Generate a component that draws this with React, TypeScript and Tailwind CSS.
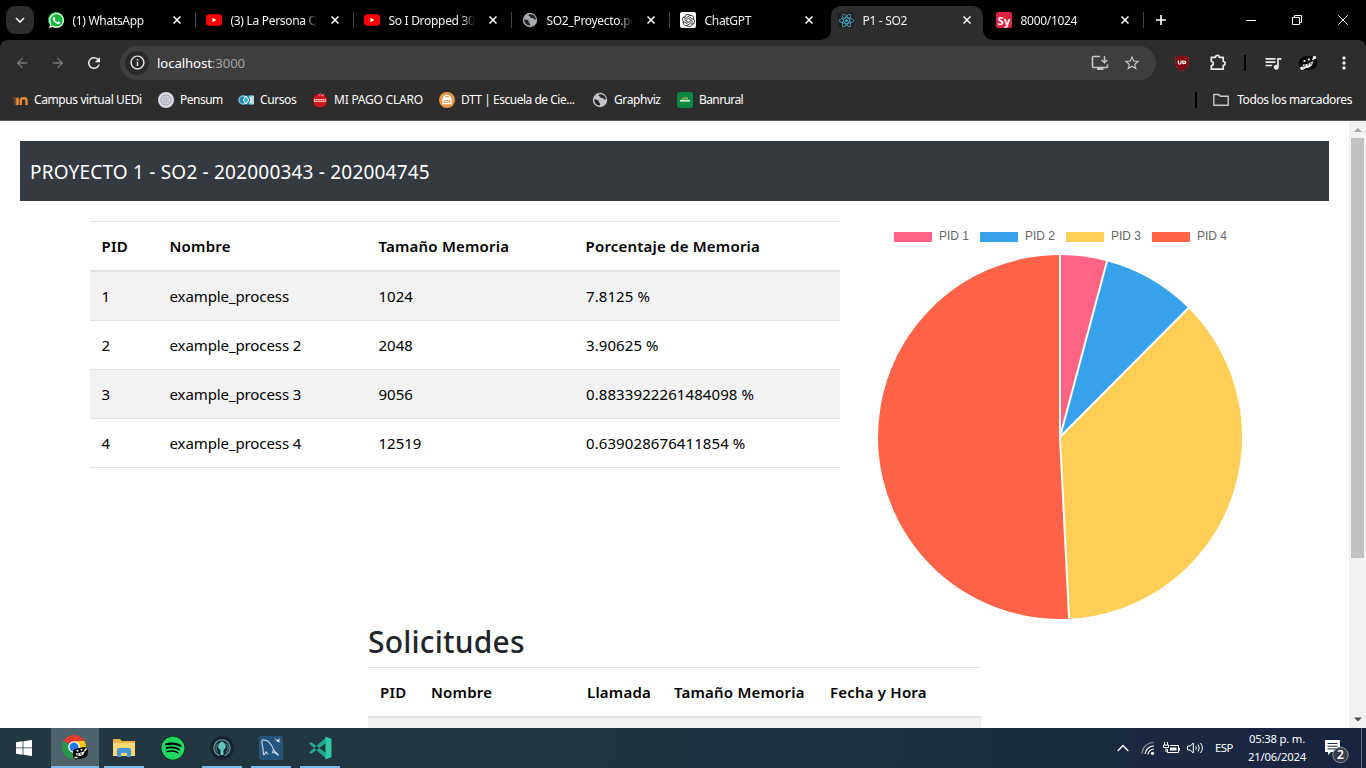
import type { ReactNode } from "react";
import { FaWhatsapp, FaReact, FaSpotify } from "react-icons/fa";
import { SiOpenai } from "react-icons/si";
import {
  MdArrowBack, MdArrowForward, MdRefresh, MdInfoOutline, MdStarBorder,
  MdQueueMusic, MdMoreVert,
} from "react-icons/md";

function GlobeIcon({ color }: { color: string }) {
  return (
    <svg viewBox="0 0 16 16" className="size-4">
      <circle cx="8" cy="8" r="7.2" fill={color} />
      <path d="M2.2 7.2c1.6.3 3 .6 4 1.3.9.7.2 1.600 1 2.300.7.6 1.200 1 .8 2.600-3 .2-5.600-2-5.800-6.200Z" fill="#222" />
      <path d="M7.200 2.200c-.8 1-1 1.800.3 2 1.300.2.4 1.500 1.700 1.900 1.500.4 1.800-.2 2.700.8.700.8 1.400.9 2 .3C13.600 4.200 11.200 1.800 7.200 2.200Z" fill="#222" />
    </svg>
  );
}

function YoutubeIcon() {
  return (
    <svg viewBox="0 0 16 16" className="size-4">
      <rect x="0" y="2.200" width="16" height="11.600" rx="3" fill="#f00" />
      <path d="M6.400 5.700v4.600L10.300 8Z" fill="#fff" />
    </svg>
  );
}

function WhatsappIcon() {
  return (
    <span className="grid size-4 place-items-center rounded-full bg-[#17b83f] text-white">
      <FaWhatsapp className="size-[17px] shrink-0" />
    </span>
  );
}

type TabInfo = { title: string; icon: ReactNode; active?: boolean; sep?: boolean };

const tabs: TabInfo[] = [
  { title: "(1) WhatsApp", icon: <WhatsappIcon />, sep: true },
  { title: "(3) La Persona Q", icon: <YoutubeIcon />, sep: true },
  { title: "So I Dropped 30", icon: <YoutubeIcon />, sep: true },
  { title: "SO2_Proyecto.pd", icon: <GlobeIcon color="#a5a9b0" />, sep: true },
  {
    title: "ChatGPT",
    icon: <span className="grid size-4 place-items-center rounded-[2px] bg-white text-[#333]"><SiOpenai className="size-[13px]" /></span>,
  },
  {
    title: "P1 - SO2",
    active: true,
    icon: <span className="grid size-4 place-items-center rounded-[3px] bg-[#20232a] text-[#53b9d4]"><FaReact className="size-[15px]" /></span>,
  },
  {
    title: "8000/1024",
    sep: true,
    icon: <span className="grid size-4 place-items-center rounded-[2px] bg-[#dc2344] text-[11px] leading-none font-bold text-white">Sy</span>,
  },
];

function CloseX() {
  return (
    <svg viewBox="0 0 8 8" className="size-2">
      <path d="M.5.5l7 7M7.500.5l-7 7" stroke="#fff" strokeWidth="1.500" />
    </svg>
  );
}

function Tab({ title, icon, active, sep }: TabInfo) {
  return (
    <div className={active ? "relative mr-[5px] ml-px flex h-[34px] w-[152px] items-center rounded-t-[10px] bg-[#2d2d2d] pb-[6px] pl-[7px]" : "relative flex h-[34px] w-[158px] items-center pb-[6px] pl-2"}>
      {active && (
        <>
          <svg viewBox="0 0 10 10" className="absolute bottom-0 -left-[10px] size-[10px]"><path d="M10 0v10H0A10 10 0 0 0 10 0Z" fill="#2d2d2d" /></svg>
          <svg viewBox="0 0 10 10" className="absolute -right-[10px] bottom-0 size-[10px]"><path d="M0 0v10h10A10 10 0 0 1 0 0Z" fill="#2d2d2d" /></svg>
        </>
      )}
      {icon}
      <div className="ml-[8.500px] w-[86.500px] overflow-hidden mask-r-from-85% mask-r-to-100% pt-px text-[12px] leading-4 tracking-[-0.3px] whitespace-nowrap text-[#f2f2f2]">{title}</div>
      <span className="ml-[14px]"><CloseX /></span>
      {sep && <i className="ml-[14px] h-4 w-px bg-[#444]" />}
    </div>
  );
}

function TabStrip() {
  return (
    <div className="flex h-10 items-start bg-black pt-[6px] pl-[6px]">
      <div className="mr-[6px] grid size-7 place-items-center rounded-[9px] bg-[#2d2d2d]">
        <svg viewBox="0 0 10 6" className="h-[6px] w-[10px]"><path d="M1 1l4 4 4-4" fill="none" stroke="#fff" strokeWidth="1.700" /></svg>
      </div>
      {tabs.map((t) => <Tab key={t.title} {...t} />)}
      <svg viewBox="0 0 12 12" className="mt-2 ml-[9px] size-3"><path d="M6 1v10M1 6h10" stroke="#fff" strokeWidth="1.600" /></svg>
      <div className="ml-auto flex h-7 items-center pr-[18px]">
        <svg viewBox="0 0 10 10" className="mr-9 size-[10px]"><path d="M0 5.500h10" stroke="#fff" /></svg>
        <svg viewBox="0 0 10 10" className="mr-9 size-[10px]"><path d="M.5 2.500h7v7h-7zM2.500 2.500v-2h7v7h-2" fill="none" stroke="#fff" /></svg>
        <svg viewBox="0 0 10 10" className="size-[10px]"><path d="M.3.3l9.400 9.400M9.700.3L.3 9.700" stroke="#fff" /></svg>
      </div>
    </div>
  );
}

function Toolbar() {
  return (
    <div className="bg-black">
      <div className="flex h-[45px] items-center rounded-t-[8px] bg-[#2d2d2d] pl-[14px]">
        <MdArrowBack className="size-4 text-[#757575]" />
        <MdArrowForward className="ml-5 size-4 text-[#757575]" />
        <MdRefresh className="ml-[19px] size-[18px] text-[#e8e8e8]" />
        <div className="ml-[17px] flex h-[34px] w-[1036px] shrink-0 items-center rounded-full bg-[#3e3e3e] pl-[5px]">
          <span className="grid size-6 place-items-center rounded-full bg-[#2a2a2a]"><MdInfoOutline className="size-[17px] text-[#e8e8e8]" /></span>
          <span className="ml-2 text-[13.200px] leading-5 tracking-[-0.1px] text-white">localhost<span className="text-[#a3a3a3]">:3000</span></span>
          <svg viewBox="0 0 18 16" className="ml-auto h-4 w-[18px]"><path d="M9 1.500H2.500Q1.500 1.500 1.500 2.500v9q0 1 1 1h13q1 0 1-1V9.500" fill="none" stroke="#c3c3c3" strokeWidth="1.700" /><path d="M6 12.500h6.500V15H6z" fill="#c3c3c3" /><path d="M13.500 1v6M10.700 5l2.800 2.800L16.300 5" fill="none" stroke="#c3c3c3" strokeWidth="1.500" /></svg>
          <MdStarBorder className="mr-[15px] ml-[14px] size-[18px] text-[#c3c3c3]" />
        </div>
        <svg viewBox="0 0 16 16" className="ml-[18px] size-4 shrink-0">
          <path d="M8 .5c2 1.300 4.300 1.700 6.500 1.700v5c0 4.300-2.700 7-6.500 8.500-3.800-1.500-6.500-4.200-6.500-8.500v-5C4 2.200 6 1.800 8 .5Z" fill="#800610" stroke="#a2242d" strokeWidth=".7" />
          <path d="M4.300 5.500v2.200c0 1.700 2.800 1.700 2.800 0V5.500M8.900 5.500v3.600M8.900 6h.8c2.700 0 2.700 2.700 0 2.700h-.8" fill="none" stroke="#fff" strokeWidth="1.200" />
        </svg>
        <svg viewBox="0 0 17 17" className="ml-5 size-[17px] shrink-0">
          <path d="M1.300 3.300h4.200a1.900 1.900 0 0 1 3.800 0h3.900v4.200a1.900 1.900 0 0 1 0 3.800v3.900H1.300v-3.700a2 2 0 0 0 0-4z" fill="none" stroke="#e8e8e8" strokeWidth="1.700" strokeLinejoin="round" />
        </svg>
        <i className="ml-[17px] h-4 w-[2px] bg-black" />
        <MdQueueMusic className="ml-[17px] size-[20px] text-[#e8e8e8]" />
        <svg viewBox="0 0 20 16" className="ml-[15px] h-4 w-5">
          <ellipse cx="10" cy="8" rx="9.500" ry="7.300" fill="#090909" />
          <path d="M3.500 13.500Q6 14 8 12M14.500 5 16.500 2.500" fill="none" stroke="#eee" strokeWidth="1.700" />
          <path d="M4.500 9.500c3 .3 7-.8 10.200-3.500 1.200 7-8.500 9.500-10.200 3.500Z" fill="#eee" />
          <path d="M7 9.500v2M10 8.500v2M12.800 7.500v2" stroke="#222" />
          <circle cx="4" cy="13.300" r="1.800" fill="#eee" /><circle cx="16.500" cy="2.500" r="1.700" fill="#eee" />
          <circle cx="6.500" cy="6" r="1.100" fill="#eee" /><circle cx="11" cy="4.500" r="1.100" fill="#eee" />
        </svg>
        <MdMoreVert className="ml-4 size-5 text-[#e8e8e8]" />
      </div>
    </div>
  );
}

function Bookmark({ icon, label, cls }: { icon: ReactNode; label: string; cls: string }) {
  return (
    <div className={cls}>
      {icon}
      <span className="ml-[6px]">{label}</span>
    </div>
  );
}

function Bookmarks() {
  return (
    <div className="flex h-9 items-center border-b border-[#595959] bg-[#2d2d2d] pb-[6px] pl-3 text-[12px] leading-4 tracking-[-0.4px] whitespace-nowrap text-white">
      <Bookmark cls="flex w-[146px] items-center" label="Campus virtual UEDi" icon={
        <svg viewBox="0 0 16 16" className="size-4">
          <path d="M1 6h2v7M4.500 6.500v7" fill="none" stroke="#6b4b35" strokeWidth="1.800" />
          <path d="M5.500 5.500v7.500M8.800 13V8.500c0-3 5.700-3 5.700 0V13" fill="none" stroke="#ee8c35" strokeWidth="2.400" />
        </svg>} />
      <Bookmark cls="flex w-[80px] items-center tracking-[-0.5px]" label="Pensum" icon={
        <svg viewBox="0 0 16 16" className="size-4"><circle cx="8" cy="8" r="8" fill="#d8d9e2" /><circle cx="8" cy="8" r="5" fill="none" stroke="#9c9eae" /><path d="M6 5v6M8 4.500v7M10 5v6" stroke="#a9aaba" /></svg>} />
      <Bookmark cls="flex w-[74px] items-center" label="Cursos" icon={
        <svg viewBox="0 0 16 16" className="size-4"><path d="M11 3.500h5v9h-5z" fill="#b9dbe5" /><path d="M5 3.500h8v9H5z" fill="#238fb2" /><circle cx="5" cy="8" r="4" fill="#1d86ab" stroke="#7dc5da" strokeWidth="1.500" /><path d="M8 4l3 4-3 4-3-4Z" fill="#31b7dc" stroke="#fff" /><path d="M11.500 4.500a5 5 0 0 1 0 7" fill="none" stroke="#fff" strokeWidth="1.300" /></svg>} />
      <Bookmark cls="flex w-[127px] items-center tracking-[-0.230px]" label="MI PAGO CLARO" icon={
        <svg viewBox="0 0 16 16" className="size-4"><circle cx="8" cy="8.500" r="7" fill="#cf1720" /><path d="M2 8.500h12" stroke="#efb0b0" strokeWidth="3" /><path d="M3 8.500h10" stroke="#c33" strokeWidth="1.200" strokeDasharray="1.500 .7" /><path d="M7 3.500l1.500-2M9 4l3-1.500" stroke="#f99" /></svg>} />
      <Bookmark cls="flex w-[153px] items-center tracking-[-0.480px]" label="DTT | Escuela de Cie..." icon={
        <svg viewBox="0 0 16 16" className="size-4"><circle cx="8" cy="8" r="8" fill="#ea9548" /><path d="M4 7.500h8v4H4zM4.500 6C5.500 2.500 10.500 2.500 11.500 6Z" fill="none" stroke="#fff" strokeWidth="1.300" /><path d="M6 9.500h4" stroke="#fff" /></svg>} />
      <Bookmark cls="flex w-[85px] items-center" label="Graphviz" icon={<GlobeIcon color="#c2c4ca" />} />
      <Bookmark cls="flex items-center tracking-[-0.600px]" label="Banrural" icon={
        <svg viewBox="0 0 16 16" className="size-4"><rect width="16" height="16" rx="2.500" fill="#0c8742" /><path d="M3 8.700h10" stroke="#d4ecd9" strokeWidth="1.800" /><path d="M5 7c2-1 4-1.500 6-.5" stroke="#e2c34f" fill="none" /></svg>} />
      <i className="ml-auto h-4 w-[2px] bg-black" />
      <svg viewBox="0 0 16 14" className="mr-2 ml-4 h-[14px] w-4"><path d="M.8 1.500h5l1.500 1.800h7.900v9H.8z" fill="none" stroke="#c7c7c7" strokeWidth="1.400" strokeLinejoin="round" /></svg>
      <span className="mr-[14px]">Todos los marcadores</span>
    </div>
  );
}

const processes = [
  ["1", "example_process", "1024", "7.8125 %"],
  ["2", "example_process 2", "2048", "3.90625 %"],
  ["3", "example_process 3", "9056", "0.8833922261484098 %"],
  ["4", "example_process 4", "12519", "0.639028676411854 %"],
];

function ProcessTable() {
  return (
    <div className="mt-5 ml-[90px] w-[750px] text-[15px] leading-6 text-black">
      <div className="grid h-[51px] grid-cols-[68px_209px_207px_1fr] items-center border-t border-b-2 border-[#dee2e6] font-semibold tracking-[0.2px]">
        {["PID", "Nombre", "Tamaño Memoria", "Porcentaje de Memoria"].map((h) => <span key={h} className="pl-[11.500px]">{h}</span>)}
      </div>
      {processes.map(([pid, name, size, pct]) => (
        <div key={pid} className="grid h-[49px] grid-cols-[68px_209px_207px_1fr] items-center border-b border-[#dee2e6] odd:bg-white even:bg-[#f2f2f2]">
          <span className="pl-[11.500px]">{pid}</span>
          <span className="pl-[11.500px] tracking-[-0.1px]">{name}</span>
          <span className="pl-[11.500px]">{size}</span>
          <span className="pl-3 tracking-[0.090px]">{pct}</span>
        </div>
      ))}
    </div>
  );
}

const slices = [
  { label: "PID 1", value: 1024, color: "#ff6384" },
  { label: "PID 2", value: 2048, color: "#36a2eb" },
  { label: "PID 3", value: 9056, color: "#ffce56" },
  { label: "PID 4", value: 12519, color: "#ff6347" },
];

function Pie() {
  const total = slices.reduce((s, x) => s + x.value, 0);
  const point = (v: number) => {
    const a = (v / total) * Math.PI * 2;
    return `${183 + 182 * Math.sin(a)} ${183 - 182 * Math.cos(a)}`;
  };
  let acc = 0;
  return (
    <svg viewBox="0 0 366 366" className="mt-[12px] size-[366px]">
      {slices.map((s) => {
        const from = acc;
        acc += s.value;
        return <path key={s.label} d={`M183 183L${point(from)}A182 182 0 ${s.value * 2 > total ? 1 : 0} 1 ${point(acc)}Z`} fill={s.color} />;
      })}
      {slices.map((s) => {
        const line = <path key={s.label} d={`M183 183L${point(acc)}`} stroke="#fff" strokeWidth="2" />;
        acc += s.value;
        return line;
      })}
    </svg>
  );
}

function Chart() {
  return (
    <div className="mt-[31px] ml-[37px] flex w-[366px] flex-col items-center font-['Liberation_Sans',sans-serif]">
      <div className="flex h-[10px] items-center gap-[10px] pl-[2px]">
        {slices.map((s) => (
          <div key={s.label} className="flex w-[76px] items-center gap-[7px] text-[12px] leading-3 whitespace-nowrap text-[#666]">
            <i className="h-[10px] w-[38px] shrink-0" style={{ backgroundColor: s.color }} />
            <span className="-mt-[2px]">{s.label}</span>
          </div>
        ))}
      </div>
      <Pie />
    </div>
  );
}

function Page() {
  return (
    <div className="flex h-[607px] bg-white">
      <main className="h-full w-[1349px] overflow-hidden pt-5">
        <header className="mr-5 ml-5 flex h-[60px] items-center bg-[#343a40] pt-[2px] pl-[10px] text-[19px] tracking-[0.200px] text-white">
          PROYECTO 1 - SO2 - 202000343 - 202004745
        </header>
        <div className="flex h-[420px] items-start">
          <ProcessTable />
          <Chart />
        </div>
        <section className="ml-[368px] w-[613px]">
          <h2 className="h-[46px] pt-[2px] text-[30px] leading-[38px] font-medium tracking-[0.200px] text-[#212529]">Solicitudes</h2>
          <div className="grid h-[51px] grid-cols-[51px_156px_87px_156px_1fr] items-center border-t border-b-2 border-[#dee2e6] text-[15px] font-semibold tracking-[0.2px] text-black">
            {["PID", "Nombre", "Llamada", "Tamaño Memoria", "Fecha y Hora"].map((h) => <span key={h} className="pl-3 whitespace-nowrap">{h}</span>)}
          </div>
          <div className="h-12 bg-[#f2f2f2]" />
        </section>
      </main>
      <div className="flex h-full w-[17px] flex-col items-center bg-[#f1f1f1]">
        <svg viewBox="0 0 17 17" className="size-[17px]"><path d="M5 11h8L9 7Z" fill="#a3a3a3" /></svg>
        <div className="h-[420px] w-[13px] bg-[#c1c1c1]" />
        <svg viewBox="0 0 17 17" className="mt-auto size-[17px]"><path d="M5 6.500h8l-4 4Z" fill="#505050" /></svg>
      </div>
    </div>
  );
}

function ChromeIcon() {
  return (
    <svg viewBox="0 0 26 26" className="size-[26px]">
      <path d="M12 12 1.600 6A12 12 0 0 1 22.400 6Z" fill="#e33b2e" />
      <path d="M12 12 1.600 6A12 12 0 0 0 12 24l5-9Z" fill="#249a48" />
      <path d="M12 12 12 6h10.400A12 12 0 0 1 12 24l5-9Z" fill="#fbc816" />
      <circle cx="12" cy="12" r="5.800" fill="#fff" /><circle cx="12" cy="12" r="4.500" fill="#2376e5" />
      <path d="M11 17q0-3 4-3.500l7-1.500q4 0 4 5 0 5-4 6l-7 1.500q-4 0-4-4Z" fill="#080808" />
      <path d="M13.500 18.500q4 0 9-2.500c.5 5-7.500 7-9 2.500Z" fill="#eee" />
      <path d="M16 18.500v2M19 18v2" stroke="#222" />
      <path d="M12.500 22.500h3M22.500 16l2-2.500" stroke="#eee" strokeWidth="1.500" />
      <circle cx="15.500" cy="15.800" r="1" fill="#eee" /><circle cx="19.500" cy="14.700" r="1" fill="#eee" />
    </svg>
  );
}

function TaskItem({ children, kind }: { children: ReactNode; kind: "active" | "open" | "idle" }) {
  return (
    <div className={kind === "active" ? "flex h-10 w-12 flex-col items-center bg-[#4e626c]" : "flex h-10 w-10 flex-col items-center"}>
      <div className="grid h-[38px] place-items-center pt-[2px]">{children}</div>
      {kind !== "idle" && <div className="h-[2px] w-full bg-[#76b9ed]" />}
    </div>
  );
}

function Taskbar() {
  return (
    <div className="flex h-10 items-center bg-linear-to-r from-[#233840] via-[#20343f] via-45% to-[#17243f] text-white">
      <svg viewBox="0 0 16 16" className="ml-4 size-4"><path d="M0 2.200 6.600 1.300v6.200H0zM7.400 1.200 16 0v7.500H7.400zM0 8.300h6.600v6.400L0 13.800zM7.400 8.300H16V16l-8.600-1.200z" fill="#fff" /></svg>
      <div className="ml-[19px] flex gap-[9px]">
        <div className="-mr-1"><TaskItem kind="active"><ChromeIcon /></TaskItem></div>
        <TaskItem kind="open">
          <svg viewBox="0 0 22 20" className="h-5 w-[22px]"><path d="M0 1h7l2 2h13v15H0z" fill="#e9b540" /><path d="M0 5h22v13H0z" fill="#fcd975" /><path d="M4 19v-7q0-2 2-2h10q2 0 2 2v7h-4v-4H8v4z" fill="#4694d1" /></svg>
        </TaskItem>
        <TaskItem kind="idle"><span className="grid size-6 place-items-center rounded-full bg-black"><FaSpotify className="size-6 text-[#1ed760]" /></span></TaskItem>
        <TaskItem kind="open">
          <svg viewBox="0 0 24 24" className="size-6">
            <circle cx="12" cy="12" r="11.800" fill="#17232c" />
            <path d="M9.500 19.500a8 8 0 1 1 5 0" fill="none" stroke="#639b9b" strokeWidth="1.200" />
            <path d="M8 16.500c-3-3-2.500-7 .5-9M16 16.500c3-3 2.500-7-.5-9" fill="none" stroke="#3e7277" strokeWidth="1.500" />
            <path d="M12 5.500c3 1.500 4.500 4 3.500 6.500l-2 2.200V19h-3v-4.800l-2-2.200c-1-2.500.5-5 3.500-6.500Z" fill="#62c8bc" />
          </svg>
        </TaskItem>
        <TaskItem kind="open">
          <svg viewBox="0 0 24 24" className="size-6"><rect width="24" height="24" rx="2" fill="#24537e" /><path d="M5 19c-1.500-2-.5-4-1-7C3 9 2 6 3.500 4c5-.5 9 4 11 9.500.5 2 3 3 5 5.500M5 19l2-3 2 2.500M14.500 13.500l-1 3 3 .5 3 2.500" fill="none" stroke="#d0deeb" strokeWidth="1.100" /><path d="M15.500 1.500 18 4l3-1.500L20 5l2 1.500-4-.8Z" fill="#e0e9f0" /></svg>
        </TaskItem>
        <TaskItem kind="open">
          <svg viewBox="0 0 24 24" className="size-6"><path d="M1 7.500 3 6l15 11v5.500zM1 16.500 3 18 18 7V1.500z" fill="#21a98f" /><path d="M17.500.5 23.500 3v18l-6 2.500z" fill="#2fc7aa" /></svg>
        </TaskItem>
      </div>
      <div className="ml-auto flex items-center">
        <svg viewBox="0 0 12 8" className="h-2 w-3"><path d="M.7 7 6 1.500 11.300 7" fill="none" stroke="#fff" strokeWidth="1.300" /></svg>
        <svg viewBox="0 0 14 14" className="ml-[12px] size-[14px] text-white"><path d="M1 12.500A11.500 11.500 0 0 1 12.500 1.500" fill="none" stroke="#8793a5" strokeWidth="1.200" /><path d="M4 13A9 9 0 0 1 13 5M7 13.500A6 6 0 0 1 13 8" fill="none" stroke="#fff" strokeWidth="1.200" /><circle cx="11.500" cy="12.300" r="1.600" fill="#fff" /></svg>
        <svg viewBox="0 0 17 14" className="ml-2 h-[14px] w-[17px]"><path d="M1.500 1v3M4.500 1v3M.5 4h5v2.500h-5zM3 6.500V11" fill="none" stroke="#fff" /><path d="M7 4.500h8.500v7H4.500V8" fill="none" stroke="#fff" /><path d="M7 6.500h6.500v3H7zM16 7h1v2.500h-1z" fill="#fff" /></svg>
        <svg viewBox="0 0 17 14" className="ml-[7px] h-[14px] w-[17px]"><path d="M.5 5h2.800l3-3v10l-3-3H.5zM8.700 5.300q1.300 1.700 0 3.400M11 3.500q2.800 3.500 0 7M13.500 2q3.800 5 0 10" fill="none" stroke="#fff" /></svg>
        <span className="ml-[11px] w-[19px] text-[11.300px] tracking-[-0.5px]">ESP</span>
        <div className="ml-[13px] flex w-[60px] flex-col items-center text-[11.300px] leading-[18px] tracking-[-0.2px] whitespace-nowrap"><span>05:38 p. m.</span><span>21/06/2024</span></div>
        <svg viewBox="0 0 25 26" className="mt-[6px] ml-[17px] h-[26px] w-[25px]">
          <path d="M1 2h15v12H7l-3 3v-3H1z" fill="#fff" /><path d="M3.500 5.500h10M3.500 8.200h10M3.500 10.900h10" stroke="#1b2a44" />
          <circle cx="16.500" cy="17" r="7.700" fill="#373d4a" stroke="#8d939f" /><text x="16.500" y="21.300" textAnchor="middle" fontSize="12" fontWeight="600" fill="#fff">2</text>
        </svg>
        <i className="ml-[12px] h-10 w-px bg-[#667085]" /><i className="w-1" />
      </div>
    </div>
  );
}

export default function App() {
  return (
    <div className="h-[768px] w-[1366px] overflow-hidden font-['Noto_Sans','Open_Sans',sans-serif]">
      <TabStrip />
      <Toolbar />
      <Bookmarks />
      <Page />
      <Taskbar />
    </div>
  );
}
